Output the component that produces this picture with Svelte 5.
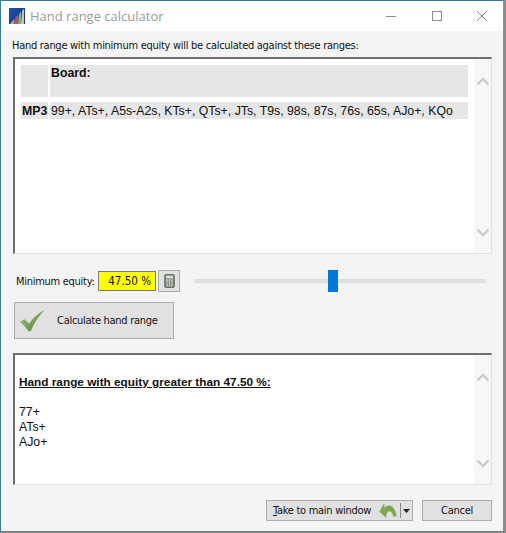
<script lang="ts">
  const ranges = '99+, ATs+, A5s-A2s, KTs+, QTs+, JTs, T9s, 98s, 87s, 76s, 65s, AJo+, KQo';
  const results = ['77+', 'ATs+', 'AJo+'];
  let equity = $state(47.5);
  // slider runs 0..100 over the track, the thumb is centred on the equity value
  const thumbLeft = $derived(`calc(${equity}% - 5px)`);
</script>

{#snippet scrollbar()}
  <div class="scrollbar">
    <svg width="14" height="9" viewBox="0 0 14 9"><path d="M1.5 7.5 L7 2 L12.5 7.5" fill="none" stroke="#c9c9c9" stroke-width="2.4" /></svg>
    <svg width="14" height="9" viewBox="0 0 14 9"><path d="M1.5 1.5 L7 7 L12.5 1.5" fill="none" stroke="#c9c9c9" stroke-width="2.4" /></svg>
  </div>
{/snippet}

<div class="window">
  <header class="titlebar">
    <svg class="app-icon" width="16" height="16" viewBox="0 0 16 16">
      <defs>
        <linearGradient id="sky" x1="0" y1="0" x2="1" y2="1">
          <stop offset="0" stop-color="#1c55b8" />
          <stop offset="1" stop-color="#16306e" />
        </linearGradient>
      </defs>
      <rect width="16" height="16" fill="url(#sky)" />
      <path d="M1 16 L5 11 L5 16Z" fill="#a9a9b8" />
      <path d="M5 16 L6 10 L9 7 L9 16Z" fill="#c25050" />
      <path d="M9 16 L10 6 L12 4 L12 16Z" fill="#7fb08a" />
      <path d="M12 16 L13 3 L15 1 L15 16Z" fill="#d9b8b8" />
    </svg>
    <span class="title">Hand range calculator</span>
    <div class="controls">
      <svg width="12" height="12" viewBox="0 0 12 12"><path d="M1 6.5H11" stroke="#8a8a8a" fill="none" /></svg>
      <svg width="12" height="12" viewBox="0 0 12 12"><rect x="1.5" y="1.5" width="9" height="9" stroke="#8a8a8a" fill="none" /></svg>
      <svg width="12" height="12" viewBox="0 0 12 12"><path d="M1 1L11 11M11 1L1 11" stroke="#8a8a8a" fill="none" /></svg>
    </div>
  </header>

  <main class="content">
    <p class="intro">Hand range with minimum equity will be calculated against these ranges:</p>

    <section class="panel top-panel">
      <div class="table">
        <div class="row board-row">
          <div class="cell tag"></div>
          <div class="cell value"><b>Board:</b></div>
        </div>
        <div class="row">
          <div class="cell tag"><b>MP3</b></div>
          <div class="cell value">{ranges}</div>
        </div>
      </div>
      {@render scrollbar()}
    </section>

    <div class="equity-row">
      <span class="equity-label">Minimum equity:</span>
      <div class="equity-input">47.50 %</div>
      <button class="calc-btn" aria-label="Calculator">
        <svg width="11" height="14" viewBox="0 0 12 16">
          <rect x="0.5" y="0.5" width="11" height="15" rx="1.5" fill="#7f8a7c" stroke="#5f645d" />
          <rect x="2" y="2" width="8" height="3" fill="#d8e0d4" />
          <path d="M2.5 7H4M5.2 7H6.8M8 7H9.5M2.5 9.2H4M5.2 9.2H6.8M8 9.2H9.5M2.5 11.4H4M5.2 11.4H6.8M8 11.4H9.5M2.5 13.4H4M5.2 13.4H6.8M8 13.4H9.5" stroke="#eceee6" stroke-width="1.2" />
        </svg>
      </button>
      <div class="slider">
        <div class="track"></div>
        <div class="thumb" style="left: {thumbLeft}"></div>
      </div>
    </div>

    <button class="calculate">
      <svg width="24" height="22" viewBox="0 0 25 22">
        <defs>
          <linearGradient id="tick" x1="0" y1="0" x2="1" y2="1">
            <stop offset="0" stop-color="#a9c987" />
            <stop offset="1" stop-color="#4d7d2c" />
          </linearGradient>
        </defs>
        <path d="M0.5 12 L4.5 9.5 L9.5 14 C13 8.5 18 4 24.5 0.5 C19 6 14.5 13 11 21.5 L9 21.5 C7 18 4 15 0.5 12Z" fill="url(#tick)" stroke="#6b9350" stroke-width="0.5" />
      </svg>
      <span>Calculate hand range</span>
    </button>

    <section class="panel bottom-panel">
      <div class="result">
        <p class="result-title">Hand range with equity greater than 47.50 %:</p>
        {#each results as line}
          <div>{line}</div>
        {/each}
      </div>
      {@render scrollbar()}
    </section>

    <footer class="actions">
      <div class="split-btn">
        <button class="split-main">
          <span><u>T</u>ake to main window</span>
          <svg width="18" height="15" viewBox="0 0 18 15">
            <path d="M0.5 8.5 L7 14.5 L7.5 10 C10.5 7 13 8 14.5 13.5 L17.5 13 C16 4 11 -0.5 5.5 5 L5 1Z" fill="#7da54f" stroke="#93b873" stroke-width="0.5" />
          </svg>
        </button>
        <button class="split-arrow" aria-label="More">
          <svg width="7" height="4" viewBox="0 0 7 4"><path d="M0 0H7L3.5 4Z" fill="#222" /></svg>
        </button>
      </div>
      <button class="cancel">Cancel</button>
    </footer>
  </main>
</div>

<style>
  :global(body) {
    margin: 0;
    background: #8c8c8c;
  }

  .window {
    width: 504px;
    height: 532px;
    box-sizing: border-box;
    border-top: 1px solid #3b7790;
    border-left: 1px solid #3b7f9c;
    border-right: 1px solid #8f8f8f;
    border-bottom: 1px solid #6f7f88;
    background: #f4f4f4;
    display: flex;
    flex-direction: column;
    font-family: 'DejaVu Sans Condensed', 'Liberation Sans', sans-serif;
    color: #111;
    overflow: hidden;
  }

  .titlebar {
    height: 30px;
    flex: none;
    background: #fff;
    display: flex;
    align-items: center;
    padding-left: 8px;
    padding-bottom: 1px;
    box-sizing: border-box;
  }

  .app-icon {
    margin-right: 5px;
  }

  .title {
    font-family: 'Open Sans', sans-serif;
    font-size: 13px;
    color: #9a9a9a;
  }

  .controls {
    margin-left: auto;
    display: flex;
    gap: 33.5px;
    padding-right: 15px;
  }

  .content {
    flex: 1;
    padding: 0 11px 0 12px;
    display: flex;
    flex-direction: column;
    min-height: 0;
  }

  .intro {
    margin: 7px 0 0 -1px;
    font-size: 11px;
    line-height: 15px;
    letter-spacing: -0.28px;
    white-space: nowrap;
  }

  .panel {
    box-sizing: border-box;
    background: #fff;
    border-top: 2px solid #6e6e6e;
    border-left: 2px solid #6e6e6e;
    border-right: 1px solid #e2e2e2;
    border-bottom: 1px solid #e2e2e2;
    display: flex;
    font-family: 'Liberation Sans', Arial, sans-serif;
    font-size: 12.3px;
  }

  .top-panel {
    height: 197px;
    margin-top: 4px;
  }

  .table {
    flex: 1;
    padding: 6px 6px 0 6px;
    display: flex;
    flex-direction: column;
    gap: 5px;
  }

  .row {
    display: flex;
    gap: 2px;
    height: 17px;
    line-height: 18px;
  }

  .board-row {
    height: 32px;
  }

  .cell {
    background: #e6e6e6;
    box-sizing: border-box;
  }

  .tag {
    width: 27px;
    flex: none;
    padding-left: 1px;
    white-space: nowrap;
  }

  .value {
    flex: 1;
    padding-left: 1px;
    white-space: nowrap;
  }

  .board-row .value {
    line-height: 16px;
  }

  .scrollbar {
    width: 17px;
    flex: none;
    background: #f7f7f7;
    display: flex;
    flex-direction: column;
    justify-content: space-between;
    align-items: center;
    padding: 18px 0 16px;
    box-sizing: border-box;
  }

  .equity-row {
    height: 22px;
    margin-top: 16px;
    display: flex;
    align-items: center;
  }

  .equity-label {
    font-size: 11px;
    letter-spacing: -0.28px;
    margin-left: 3px;
    width: 82px;
    flex: none;
    white-space: nowrap;
  }

  .equity-input {
    width: 58px;
    height: 20px;
    box-sizing: border-box;
    background: #ffff00;
    border: 1px solid #7a7a7a;
    font-size: 11.5px;
    line-height: 18px;
    text-align: right;
    padding-right: 4px;
  }

  .calc-btn {
    width: 22px;
    height: 22px;
    margin-left: 2px;
    padding: 0;
    background: #e1e1e1;
    border: 1px solid #adadad;
    display: flex;
    align-items: center;
    justify-content: center;
  }

  .slider {
    position: relative;
    width: 290px;
    height: 22px;
    margin-left: 15px;
  }

  .track {
    position: absolute;
    left: 0;
    right: 0;
    top: 9px;
    height: 4px;
    background: #e2e2e2;
    border: 1px solid #dadada;
    box-sizing: border-box;
  }

  .thumb {
    position: absolute;
    top: 0;
    width: 10px;
    height: 22px;
    background: #0078d7;
  }

  button {
    font-family: 'DejaVu Sans Condensed', 'Liberation Sans', sans-serif;
    font-size: 11px;
    letter-spacing: -0.28px;
    color: #111;
    cursor: default;
    white-space: nowrap;
  }

  .calculate {
    width: 160px;
    height: 37px;
    margin-top: 10px;
    margin-left: 1px;
    padding: 0 0 0 5px;
    background: #e1e1e1;
    border: 1px solid #adadad;
    display: flex;
    align-items: center;
    gap: 13px;
    box-sizing: border-box;
  }

  .bottom-panel {
    height: 132px;
    margin-top: 14px;
  }

  .result {
    flex: 1;
    padding: 20px 0 0 4px;
    line-height: 15px;
  }

  .result-title {
    margin: 0 0 15px;
    font-weight: bold;
    font-size: 11.8px;
    text-decoration: underline;
  }

  .actions {
    margin-top: 15px;
    display: flex;
    justify-content: flex-end;
    gap: 9px;
  }

  .split-btn {
    width: 147px;
    height: 21px;
    display: flex;
    box-sizing: border-box;
    background: #e1e1e1;
    border: 1px solid #adadad;
  }

  .split-main {
    flex: 1;
    background: none;
    border: none;
    padding: 0 3px 0 6px;
    display: flex;
    align-items: center;
    justify-content: space-between;
  }

  .split-arrow {
    width: 12px;
    flex: none;
    background: none;
    border: none;
    border-left: 1px solid #8a8a8a;
    margin: 2px 0;
    padding: 0;
    display: flex;
    align-items: center;
    justify-content: center;
  }

  .cancel {
    width: 70px;
    height: 21px;
    padding: 0;
    background: #e1e1e1;
    border: 1px solid #adadad;
  }
</style>
